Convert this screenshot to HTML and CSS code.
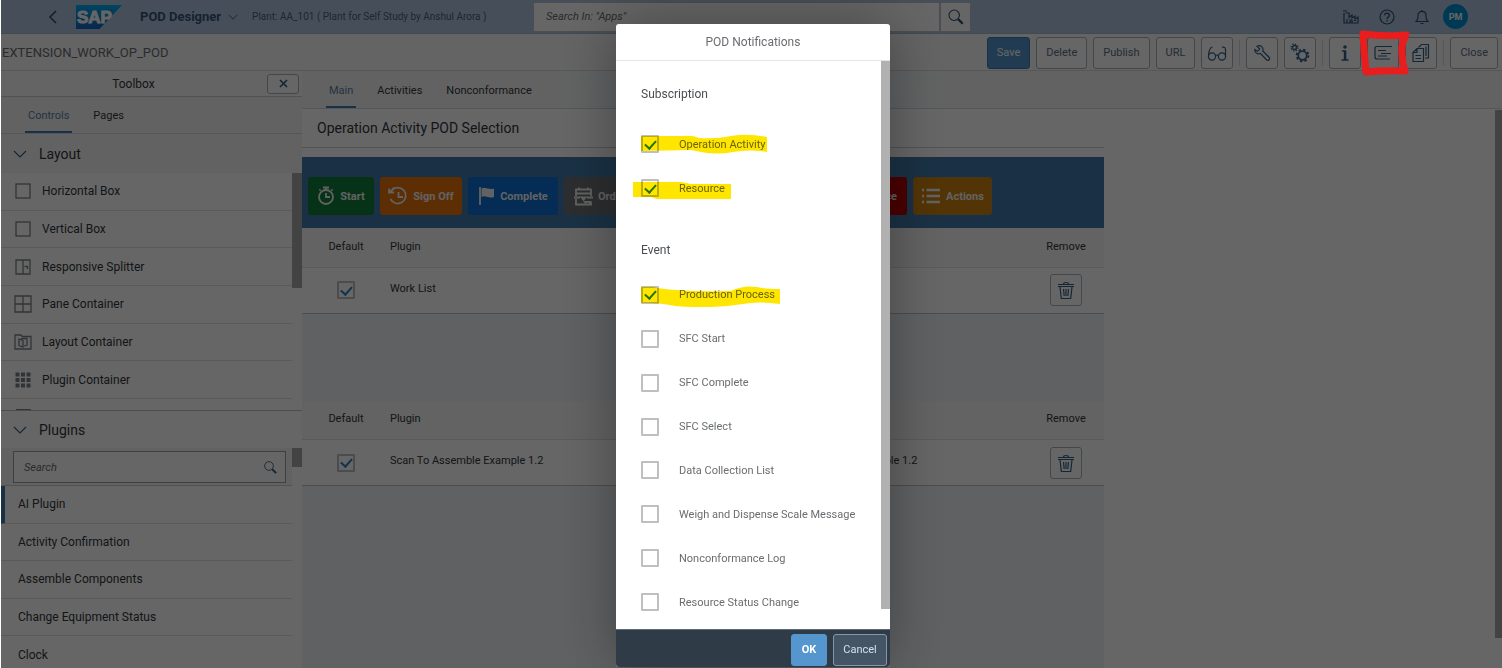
FILE: index.html
```html
<!DOCTYPE html>
<html lang="en">
<head>
<meta charset="utf-8">
<title>POD Designer</title>
<link rel="stylesheet" href="styles.css">
</head>
<body>
<svg class="defs" aria-hidden="true">
  <symbol id="i-search" viewBox="0 0 20 20"><circle cx="8" cy="8" r="5.8"/><path d="M12.3 12.3l5.2 5.2" stroke-width="2.6"/></symbol>
  <symbol id="i-down" viewBox="0 0 14 14"><path d="M1 4l6 6 6-6"/></symbol>
  <symbol id="i-trash" viewBox="0 0 20 20"><path d="M2 4.500h16M2 6.500h16M7.500 4c0-2 5-2 5 0M4 7l1.300 11.500h9.400L16 7M7.500 9l.7 7M10 9v7M12.500 9l-.7 7"/></symbol>
</svg>

<div class="page">
  <header class="shell">
    <div class="shell-left">
      <button class="plain back" aria-label="Back"><svg class="ic" width="10" height="14" viewBox="0 0 10 14"><path d="M8 1L2 7l6 6" stroke-width="1.600"/></svg></button>
      <svg class="logo" width="46" height="24" viewBox="0 0 46 24" role="img" aria-label="SAP">
        <defs><linearGradient id="sap" x1="0" y1="0" x2="0" y2="1"><stop offset="0" stop-color="#00aeef"/><stop offset="1" stop-color="#1661be"/></linearGradient></defs>
        <path fill="url(#sap)" d="M0 0h46L23.500 24H0z"/>
        <text x="1" y="18" class="logo-text">SAP</text>
      </svg>
      <button class="plain app-title">POD Designer <svg class="ic" width="10" height="10"><use href="#i-down"/></svg></button>
      <span class="plant">Plant: AA_101 ( Plant for Self Study by Anshul Arora )</span>
    </div>
    <form class="shell-search">
      <input type="text" placeholder='Search In: "Apps"' aria-label="Search in apps">
      <button type="button" aria-label="Search"><svg class="ic" width="18" height="18"><use href="#i-search"/></svg></button>
    </form>
    <div class="shell-right">
      <button class="plain" aria-label="Plant"><svg class="ic" width="16" height="14" viewBox="0 0 16 14"><path d="M1 3v10h14V7l-3 2V6l-3 2V5L6 7.500V3H2.500M0 1h4M4 13V9M7 13v-3h2v3M11 10.500h2"/></svg></button>
      <button class="plain" aria-label="Help"><svg class="ic" width="16" height="16" viewBox="0 0 16 16"><circle cx="8" cy="8" r="7"/><path d="M5.700 6.300c0-3 4.700-3 4.700 0 0 1.700-2.400 1.800-2.400 3.600M8 11v1.300" stroke-width="1.300"/></svg></button>
      <button class="plain" aria-label="Notifications"><svg class="ic" width="14" height="16" viewBox="0 0 14 16"><path d="M1 12.500c2-1.500 2-3 2-6 0-5.500 8-5.500 8 0 0 3 0 4.500 2 6zM5.500 14.500h3M7 1v1"/></svg></button>
      <button class="avatar">PM</button>
    </div>
  </header>

  <div class="objbar">
    <h1>EXTENSION_WORK_OP_POD</h1>
    <div class="tools">
      <button class="btn primary">Save</button>
      <button class="btn">Delete</button>
      <button class="btn">Publish</button>
      <button class="btn">URL</button>
      <button class="btn icon" aria-label="Preview"><svg class="ic" width="20" height="18" viewBox="0 0 20 18"><circle cx="5" cy="12.500" r="3.600"/><circle cx="15" cy="12.500" r="3.600"/><path d="M8.500 11.500q1.500-1 3 0M1.500 11.500C1.800 7 3 3.500 5.500 3M18.500 11.500V5.500c0-2-1.500-2.800-3.500-2.300"/></svg></button>
      <span class="sep"></span>
      <button class="btn icon" aria-label="Settings"><svg class="ic" width="18" height="18" viewBox="0 0 18 18"><path d="M4 2.200C7.500.5 11 3.500 9.800 7l6.500 6.500c1.200 1.500-1 3.700-2.500 2.500L7.500 9.500C4.500 10.800 1.500 8.500 1.800 5.500L4.500 7.300l2.200-2.200z"/></svg></button>
      <button class="btn icon" aria-label="Configuration"><svg class="ic" width="20" height="20" viewBox="0 0 20 20"><circle cx="12.500" cy="12.500" r="4.300" stroke-width="1.800"/><circle cx="12.500" cy="12.500" r="5.900" stroke-width="1.900" stroke-dasharray="2.300 2.330"/><circle cx="4.500" cy="4.500" r="2" stroke-width="1.300"/><circle cx="4.500" cy="4.500" r="3.400" stroke-width="1.300" stroke-dasharray="1.300 1.370"/></svg></button>
      <span class="sep"></span>
      <button class="btn icon" aria-label="Information"><svg class="ic" width="10" height="18" viewBox="0 0 10 18"><circle cx="5" cy="3" r="1" stroke-width="1.600"/><path d="M2 7h3.500v9M1.500 16h7" stroke-width="1.300"/><path d="M5 7v9" stroke-width="2.400"/></svg></button>
      <div class="marked">
        <button class="btn icon" aria-label="POD Notifications"><svg class="ic" width="20" height="16" viewBox="0 0 20 16"><path d="M19 1.500H4q-2 0-2 2v8.500q0 2 2 2h13M5 5.500h8M8 8.500h10M5 11h9"/></svg></button>
        <svg class="marker" width="56" height="50" viewBox="0 0 56 50"><path d="M6 6Q28 9 49 7Q44 15 45 26Q45 34 48 43Q28 42 9 44Q7 24 6 6z"/></svg>
      </div>
      <button class="btn icon" aria-label="Copy"><svg class="ic" width="18" height="20" viewBox="0 0 18 20"><path d="M1 9.500l4-4h6.500V18.500H1zM1 9.500h4v-4M6.500 4.500l3-3h7V15h-3.500M14 3.500V13M3.500 12.500H9M3.500 15.500H9"/></svg></button>
      <span class="sep"></span>
      <button class="btn">Close</button>
    </div>
  </div>

  <div class="work">
    <aside class="toolbox">
      <div class="tb-head"><h2>Toolbox</h2><button class="tb-close" aria-label="Close toolbox"><svg class="ic" width="9" height="9" viewBox="0 0 9 9"><path d="M1 1l7 7M8 1L1 8" stroke-width="1.700"/></svg></button></div>
      <nav class="tabs tb-tabs"><a href="#controls" class="on">Controls</a><a href="#pages">Pages</a></nav>
      <section class="layout">
        <h3><svg class="ic" width="14" height="14"><use href="#i-down"/></svg>Layout</h3>
        <div class="scroller">
          <ul>
            <li><svg class="gi" width="18" height="18" viewBox="0 0 18 18"><rect x="2" y="2" width="14" height="14"/></svg>Horizontal Box</li>
            <li><svg class="gi" width="18" height="18" viewBox="0 0 18 18"><rect x="2" y="2" width="14" height="14"/></svg>Vertical Box</li>
            <li><svg class="gi" width="18" height="18" viewBox="0 0 18 18"><path d="M2 2h14v14H2zM9 2v14M10.500 8.500h3v2.500"/></svg>Responsive Splitter</li>
            <li><svg class="gi" width="18" height="18" viewBox="0 0 18 18"><path d="M1 1h16v16H1zM9 1v16M1 9h16"/></svg>Pane Container</li>
            <li><svg class="gi" width="18" height="18" viewBox="0 0 18 18"><path d="M1 2h6l1.500 1.500H17V16H1zM5 6l4 1.500V14l-4-1.500zM7 5.500h6V12l-3 1"/></svg>Layout Container</li>
            <li><svg class="gi dots" width="18" height="18" viewBox="0 0 18 18"><path d="M3.500 1.500v15M9 1.500v15M14.500 1.500v15"/></svg>Plugin Container</li>
          </ul>
          <div class="peek"></div>
          <span class="thumb"></span>
        </div>
      </section>
      <section class="plugins">
        <h3><svg class="ic" width="14" height="14"><use href="#i-down"/></svg>Plugins</h3>
        <div class="scroller">
          <div class="find"><label><input type="search" placeholder="Search" aria-label="Search plugins"><svg class="ic" width="15" height="15"><use href="#i-search"/></svg></label></div>
          <ul>
            <li class="sel">AI Plugin</li>
            <li>Activity Confirmation</li>
            <li>Assemble Components</li>
            <li>Change Equipment Status</li>
            <li>Clock</li>
          </ul>
          <span class="thumb"></span>
        </div>
      </section>
    </aside>

    <main class="main">
      <nav class="tabs main-tabs"><a href="#main" class="on">Main</a><a href="#activities">Activities</a><a href="#nc">Nonconformance</a></nav>
      <div class="canvas">
        <div class="pod">
          <h2>Operation Activity POD Selection</h2>
          <div class="actions">
            <button class="act green"><svg width="18" height="20" viewBox="0 0 18 20"><circle cx="9" cy="11" r="7"/><path d="M6 1.500h6M9 2v2M9 7v4h4M2.500 4.500l1-1M15.500 4.500l-1-1"/></svg>Start</button>
            <button class="act orange"><svg width="20" height="20" viewBox="0 0 20 20"><path d="M4 4a8 8 0 1 1-1.500 9M1 2.500v4h5M1.500 6.500l5-5M10.500 6v5h4.500"/></svg>Sign Off</button>
            <button class="act blue"><svg width="17" height="20" viewBox="0 0 17 20"><path d="M2 1v18"/><path class="fill" d="M3.500 2.500c4-2.500 7 2 12.500 0v8.500c-5.500 2-8.500-2.500-12.500 0z"/></svg>Complete</button>
            <button class="act gray"><svg width="19" height="20" viewBox="0 0 19 20"><path d="M2 10V3.500h15V10M2 7.500h15M5 1.500v3M14 1.500v3M0 11.500h6M13 11.500h6M2 13v5.500h15V16"/><path class="fill" d="M5.500 10.500h8L9.500 15zM9 15h9l-2.500 3-2-1.500-2 1.500z"/></svg>Order Card</button>
            <button class="act red">Nonconformance</button>
            <button class="act amber"><svg width="20" height="16" viewBox="0 0 20 16"><path d="M1 2h2M1 8h2M1 14h2M5.500 2H19M5.500 8H19M5.500 14H19" stroke-width="2.400"/></svg>Actions</button>
          </div>
          <table>
            <thead><tr><th class="c">Default</th><th class="n">Plugin</th><th></th><th class="c r">Remove</th></tr></thead>
            <tbody><tr><td class="c"><input type="checkbox" checked aria-label="Default plugin Work List"></td><td>Work List</td><td></td><td class="c r"><button class="btn icon" aria-label="Remove Work List"><svg class="ic" width="20" height="20"><use href="#i-trash"/></svg></button></td></tr></tbody>
          </table>
          <div class="blank"></div>
          <table>
            <thead><tr><th class="c">Default</th><th class="n">Plugin</th><th></th><th class="c r">Remove</th></tr></thead>
            <tbody><tr><td class="c"><input type="checkbox" checked aria-label="Default plugin Scan To Assemble"></td><td>Scan To Assemble Example 1.2</td><td>Scan To Assemble Example 1.2</td><td class="c r"><button class="btn icon" aria-label="Remove Scan To Assemble"><svg class="ic" width="20" height="20"><use href="#i-trash"/></svg></button></td></tr></tbody>
          </table>
          <div class="rest"></div>
        </div>
        <span class="thumb"></span>
      </div>
    </main>
  </div>
</div>

<div class="overlay">
  <div class="dialog" role="dialog" aria-labelledby="dlg-title">
    <h2 id="dlg-title">POD Notifications</h2>
    <div class="dlg-body">
      <div class="dlg-content">
        <h3>Subscription</h3>
        <ul class="two">
          <li><label><input type="checkbox" checked>Operation Activity</label>
            <svg class="hl" width="150" height="24" viewBox="0 0 150 24"><path d="M8 4H50Q60 3 66 6Q84 7 98 4Q116 1 134 5V20Q116 17 100 20Q84 23 68 20L58 18L8 19z"/></svg></li>
          <li><label><input type="checkbox" checked>Resource</label>
            <svg class="hl" width="150" height="24" viewBox="0 0 150 24"><path d="M0 6H48L58 8H98V23H24L18 21H0z"/></svg></li>
        </ul>
        <h3>Event</h3>
        <ul class="eight">
          <li><label><input type="checkbox" checked>Production Process</label>
            <svg class="hl" width="150" height="24" viewBox="0 0 150 24"><path d="M8 4H20Q40 9 98 8Q110 2 124 4Q132 6 147 6V21Q124 18 110 21Q80 26 42 23Q20 19 8 20z"/></svg></li>
          <li><label><input type="checkbox">SFC Start</label></li>
          <li><label><input type="checkbox">SFC Complete</label></li>
          <li><label><input type="checkbox">SFC Select</label></li>
          <li><label><input type="checkbox">Data Collection List</label></li>
          <li><label><input type="checkbox">Weigh and Dispense Scale Message</label></li>
          <li><label><input type="checkbox">Nonconformance Log</label></li>
          <li><label><input type="checkbox">Resource Status Change</label></li>
        </ul>
      </div>
      <span class="dlg-thumb"></span>
    </div>
    <footer><button class="ok">OK</button><button class="cancel">Cancel</button></footer>
  </div>
</div>
</body>
</html>
```
FILE: styles.css
```css
* { box-sizing: border-box; margin: 0; padding: 0; }
html, body { height: 100%; overflow: hidden; }
body {
  font-family: Roboto, "Liberation Sans", sans-serif;
  font-size: 11px;
  color: #32363a;
  background: #fff;
}
h1, h2, h3, th { font-weight: 400; }
ul { list-style: none; }
button, input { font: inherit; color: inherit; }
a { color: inherit; text-decoration: none; }
.defs { position: absolute; width: 0; height: 0; }
.ic { fill: none; stroke: #346187; stroke-width: 1.2; flex: none; }
.plain { border: 0; background: none; display: flex; align-items: center; }

.page { height: 100%; display: flex; flex-direction: column; }

/* shell bar */
.shell {
  flex: 0 0 34px;
  display: grid;
  grid-template-columns: 1fr 438px 1fr;
  align-items: center;
  background: #afc6de;
  padding-left: 2px;
  border-bottom: 1px solid #9fb8d0;
}
.shell-left { display: flex; align-items: center; padding-left: 46px; white-space: nowrap; }
.back { width: 28px; }
.shell .ic { stroke: #2f4e70; }
.logo-text { font: 700 17px "Liberation Sans", sans-serif; fill: #fff; stroke: #fff; stroke-width: 1; }
.app-title { margin-left: 18px; font-size: 13px; font-weight: 700; gap: 7px; color: #345478; }
.plant { margin-left: 14px; font-size: 10px; color: #4c6078; }
.shell-search { display: flex; height: 30px; }
.shell-search input {
  flex: 1; min-width: 0; padding: 0 12px; border: 1px solid #bcc4cc; background: #fff;
}
.shell-search input::placeholder, .find input::placeholder { font-style: italic; color: #6a6d70; opacity: 1; }
.shell-search button {
  width: 31px; display: grid; place-items: center; border: 1px solid #bcc4cc; background: #fff;
}
.shell-right { display: flex; justify-content: flex-end; align-items: center; gap: 20px; padding-right: 34px; }
.avatar { width: 25px; height: 25px; border: 0; border-radius: 50%; background: #008fd3; color: #fff; font-size: 9px; font-weight: 700; margin-left: -6px; }

/* object bar */
.objbar {
  flex: 0 0 37px; display: flex; justify-content: space-between; align-items: center;
  padding: 0 4px 0 2px; background: #fafafa; border-bottom: 1px solid #d9d9d9;
}
.objbar h1 { font-size: 13px; color: #6a6d70; }
.tools { display: flex; align-items: center; gap: 6px; padding-top: 1px; }
.btn {
  height: 32px; padding: 0 9px; border: 1px solid #a8b0b8; border-radius: 3px;
  background: #fff; color: #5a7088;
}
.btn.primary { background: #5496cd; border-color: #427cac; color: #fff; }
.btn.icon { width: 32px; padding: 0; display: inline-grid; place-items: center; vertical-align: middle; }
.sep { width: 1px; height: 26px; background: #d9d9d9; }
.marked { position: relative; display: flex; }
.marker { position: absolute; z-index: 20; left: -10px; top: -9px; pointer-events: none; }
.marker path { fill: none; stroke: #e91d1d; stroke-width: 7; stroke-linejoin: round; }

/* workspace */
.work { flex: 1; min-height: 0; display: grid; grid-template-columns: 302px 1fr; }
.tabs { display: flex; gap: 18px; border-bottom: 1px solid #c8dceb; }
.tabs a { display: flex; align-items: center; padding: 3px 3px 0; color: #32363a; border-bottom: 2px solid transparent; }
.tabs .on { color: #5b7fa8; border-bottom-color: #427cac; }

.toolbox { display: flex; flex-direction: column; min-height: 0; background: #fff; }
.tb-head { flex: 0 0 26px; display: flex; align-items: center; border-bottom: 1px solid #ccc; background: #fafafa; padding-right: 3px; }
.tb-head h2 { flex: 1; text-align: center; font-size: 12px; }
.tb-close { width: 32px; height: 20px; border: 1px solid #a8b0b8; border-radius: 3px; background: #fff; display: grid; place-items: center; }
.tb-tabs { flex: 0 0 37px; padding-left: 25px; background: #f4f6f8; }
.toolbox h3 { display: flex; align-items: center; gap: 12px; padding-left: 13px; font-size: 14px; background: #f6f6f6; }
.layout { flex: 0 0 276px; overflow: hidden; }
.layout h3 { height: 39px; }
.scroller { position: relative; }
.scroller .thumb { position: absolute; right: 0; width: 10px; background: #a9a9a9; }
.layout .thumb { top: 0; height: 115px; }
.toolbox ul { display: flex; flex-direction: column; margin-right: 10px; font-size: 12px; }
.toolbox li { flex: 1; display: flex; align-items: center; gap: 10px; border-bottom: 1px solid #e0e0e0; }
.layout ul { height: 226px; }
.layout li { padding-left: 14px; }
.gi { fill: none; stroke: #7c8288; stroke-width: 1.3; }
.dots path { stroke-width: 4; stroke-dasharray: 4 1.5; }
.peek { margin: 10px 0 0 16px; width: 15px; height: 10px; border: 1px solid #7c8288; }
.plugins { flex: 1; min-height: 0; overflow: hidden; border-top: 1px solid #bfbfbf; }
.plugins h3 { height: 37px; background: #fff; }
.find { padding: 3px 6px 2px 13px; margin-right: 10px; background: #f6f6f6; border-bottom: 1px solid #ccc; }
.find label { display: flex; align-items: center; height: 32px; padding: 0 7px 0 10px; border: 1px solid #9a9fa5; background: #fff; }
.find input { flex: 1; min-width: 0; border: 0; background: none; outline: 0; }
.plugins ul { height: 188px; }
.plugins li { padding-left: 18px; }
.plugins .sel { border-left: 5px solid #427cac; padding-left: 13px; }
.plugins .thumb { top: 0; height: 19px; }

.main { display: flex; flex-direction: column; min-width: 0; }
.main-tabs { flex: 0 0 38px; padding-left: 24px; background: #f4f6f8; }
.canvas { flex: 1; position: relative; min-height: 0; padding-right: 398px; background: #fff; }
.canvas > .thumb { position: absolute; right: 0; top: 1px; width: 7px; height: 528px; background: #a9a9a9; }
.pod { height: 100%; display: flex; flex-direction: column; }
.pod h2 { flex: 0 0 39px; display: flex; align-items: center; padding-left: 15px; font-size: 14px; border-bottom: 1px solid #ccc; margin-bottom: 9px; }
.actions { flex: 0 0 71px; display: flex; gap: 6px; padding: 20px 6px 13px; background: #427cac; }
.act {
  display: flex; align-items: center; justify-content: center; gap: 5px; height: 38px;
  border: 1px solid transparent; border-radius: 3px; color: #f4f4f4; font-weight: 700; white-space: nowrap;
}
.act svg { fill: none; stroke: #f4f4f4; stroke-width: 1.8; flex: none; }
.act .fill { fill: #f4f4f4; stroke: none; }
.green { background: #107e3e; width: 66px; }
.orange { background: #e9730c; width: 82px; }
.blue { background: #0a6ed1; width: 90px; }
.gray { background: #6f7275; width: 150px; justify-content: flex-start; padding-left: 9px; }
.red { background: #bb0000; width: 187px; justify-content: flex-end; padding-right: 9px; }
.amber { background: #cf830f; width: 79px; border-color: #b0843c; }
table { width: 100%; border-collapse: collapse; table-layout: fixed; }
th { height: 39px; padding-bottom: 2px; text-align: left; background: #f7f7f7; border-bottom: 1px solid #e0e0e0; }
td { height: 46px; padding-bottom: 4px; background: #fff; border-bottom: 1px solid #bfbfbf; vertical-align: middle; }
.c { width: 88px; text-align: center; }
td.c { padding-bottom: 0; }
.c.r { width: 76px; }
th.n { width: 374px; }
.blank { flex: 0 0 87px; background: #f0f3f6; }
.rest { flex: 1; background: #f0f3f6; }

input[type=checkbox] {
  appearance: none; flex: none; width: 18px; height: 18px; border: 2px solid #bfbfbf; border-radius: 1px; background: #fff;
  display: inline-grid; place-items: center; vertical-align: middle;
}
input[type=checkbox]:checked::before {
  content: ""; width: 5px; height: 9px; margin-top: -2px;
  border: solid #2a7fc0; border-width: 0 2px 2px 0; transform: rotate(42deg);
}

/* dialog */
.overlay {
  position: fixed; inset: 0; z-index: 10; display: flex; justify-content: center; align-items: flex-start;
  padding: 24px 0 0 3px; background: rgba(0, 0, 0, .6); border-left: 1px solid #fff;
}
.dialog {
  width: 274px; display: flex; flex-direction: column; border-radius: 3px; overflow: hidden;
  background: #fff; box-shadow: 0 0 60px rgba(0, 0, 0, .35);
}
.dialog h2 { height: 37px; display: grid; place-items: center; font-size: 12px; color: #6a6d70; border-bottom: 1px solid #e5e5e5; }
.dlg-body { display: flex; align-items: flex-start; height: 568px; }
.dlg-content { flex: 1; padding: 19px 0 0 25px; color: #6a6d70; }
.dlg-thumb { width: 9px; height: 548px; background: #b1b1b1; }
.dialog h3 { font-size: 12px; height: 28px; line-height: 28px; color: #4a4e52; }
.dialog ul { display: flex; flex-direction: column; }
.dialog li { flex: 1; display: flex; align-items: center; position: relative; }
.dialog label { display: flex; align-items: center; gap: 20px; white-space: nowrap; }
.two { height: 88px; margin: 14px 0 26px; }
.eight { height: 351px; margin-top: 9px; }
.hl { position: absolute; left: -8px; top: 10px; mix-blend-mode: multiply; pointer-events: none; }
.hl path { fill: #ffe600; }
.dialog footer { height: 38px; display: flex; justify-content: flex-end; align-items: center; gap: 6px; padding: 2px 3px 0; background: #2f3c48; border-top: 1px solid #5b6b7a; }
.dialog footer button { height: 32px; border-radius: 3px; }
.ok { width: 36px; border: 1px solid #5496cd; background: #5496cd; color: #fff; font-weight: 700; }
.cancel { width: 54px; border: 1px solid #8696a9; background: #445566; color: #d3e0ee; }
```
